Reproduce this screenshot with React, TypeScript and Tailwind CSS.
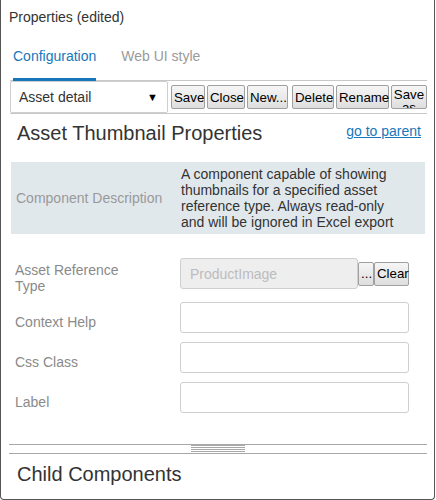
import React from "react";

const btn =
  "shrink-0 h-[24px] px-[2px] border border-[#a0a0a0] rounded-[2px] bg-gradient-to-b from-[#f6f6f6] to-[#dedede] text-[13.3px] leading-[15px] text-black";

const Field: React.FC<{ label: string }> = ({ label }) => (
  <div className="flex items-start">
    <div className="w-[179px] pl-[14px] pt-[12px] text-[14px] leading-[16px] text-[#8a8a8a]">{label}</div>
    <input className="w-[229px] h-[31px] border border-[#cfcfcf] rounded-[3px] bg-white outline-none" />
  </div>
);

export default function App() {
  return (
    <div className="w-[435px] h-[500px] border-x border-b border-[#555] rounded-b-[4px] bg-white font-['Liberation_Sans',Arial,sans-serif] text-[#333]">
      {/* Title */}
      <div className="pt-[9px] pl-[8px] text-[14px] leading-[16px]">Properties (edited)</div>

      {/* Tabs */}
      <div className="mt-[23px] ml-[9px] mr-[7px] flex border-b border-[#c8c8c8] text-[14px] leading-[16px]">
        <div className="ml-[3px] pb-[14px] border-b-[3px] border-[#1777bb] text-[#1777bb] mb-[-1px]">Configuration</div>
        <div className="ml-[25px] pb-[14px] text-[#9a9a9a]">Web UI style</div>
      </div>

      {/* Toolbar */}
      <div className="ml-[9px] mr-[7px] h-[33px] flex items-center border-b border-[#c8c8c8]">
        <div className="shrink-0 w-[158px] h-[32px] border border-[#cfcfcf] rounded-[2px] flex items-center justify-between pl-[8px] pr-[9px] text-[14px]">
          <span>Asset detail</span>
          <span className="text-[11px] text-black">▼</span>
        </div>
        <div className="ml-[3px] flex gap-[2px] items-center">
          <button className={`${btn} w-[34px]`}>Save</button>
          <button className={`${btn} w-[38px]`}>Close</button>
          <button className={`${btn} w-[41px]`}>New...</button>
          <button className={`${btn} w-[42px] ml-[2px]`}>Delete</button>
          <button className={`${btn} w-[53px]`}>Rename</button>
          <button className={`${btn} w-[36px] overflow-hidden flex flex-col items-center justify-start pt-[1px]`}>
            <span>Save</span>
            <span className="leading-[12px]">as</span>
          </button>
        </div>
      </div>

      {/* Heading */}
      <div className="mt-[8px] ml-[16px] mr-[13px] flex items-start justify-between">
        <h2 className="text-[20px] leading-[22px]">Asset Thumbnail Properties</h2>
        <a href="#" className="mt-[1px] text-[14px] leading-[16px] text-[#1777bb] underline">go to parent</a>
      </div>

      {/* Description */}
      <div className="mt-[18px] ml-[10px] mr-[9px] bg-[#e1e8ec] flex items-center py-[4px]">
        <div className="w-[170px] pl-[5px] text-[14px] text-[#999]">Component Description</div>
        <div className="w-[224px] text-[14px] leading-[16px] text-[#333]">
          A component capable of showing thumbnails for a specified asset reference type. Always read-only and will be ignored in Excel export
        </div>
      </div>

      {/* Fields */}
      <div className="mt-[24px] flex flex-col gap-[9px]">
        <div className="flex items-start h-[35px]">
          <div className="w-[179px] pl-[14px] pt-[4px] pr-[50px] text-[14px] leading-[16px] text-[#8a8a8a]">Asset Reference Type</div>
          <div className="flex items-center">
            <input
              disabled
              placeholder="ProductImage"
              className="w-[178px] h-[31px] border border-[#cfcfcf] rounded-[3px] bg-[#eeeeee] pl-[9px] text-[14px] placeholder:text-[#bcbcbc] outline-none"
            />
            <button className={`${btn} w-[16px] px-0 text-[12px]`}>...</button>
            <button className={`${btn} w-[35px] px-0`}>Clear</button>
          </div>
        </div>
        <Field label="Context Help" />
        <Field label="Css Class" />
        <Field label="Label" />
      </div>

      {/* Splitter */}
      <div className="mt-[31px] ml-[8px] mr-[7px] h-[10px] border-t border-b border-[#a8a8a8] flex justify-center">
        <div className="w-[54px] flex flex-col">
          <div className="h-[1px] bg-[#a8a8a8]" />
          <div className="h-[1px] mt-[1px] bg-[#a8a8a8]" />
          <div className="h-[1px] mt-[1px] bg-[#a8a8a8]" />
          <div className="h-[1px] mt-[1px] bg-[#a8a8a8]" />
        </div>
      </div>

      {/* Child components */}
      <div className="mt-[9px] ml-[16px] text-[20px] leading-[22px]">Child Components</div>
    </div>
  );
}
